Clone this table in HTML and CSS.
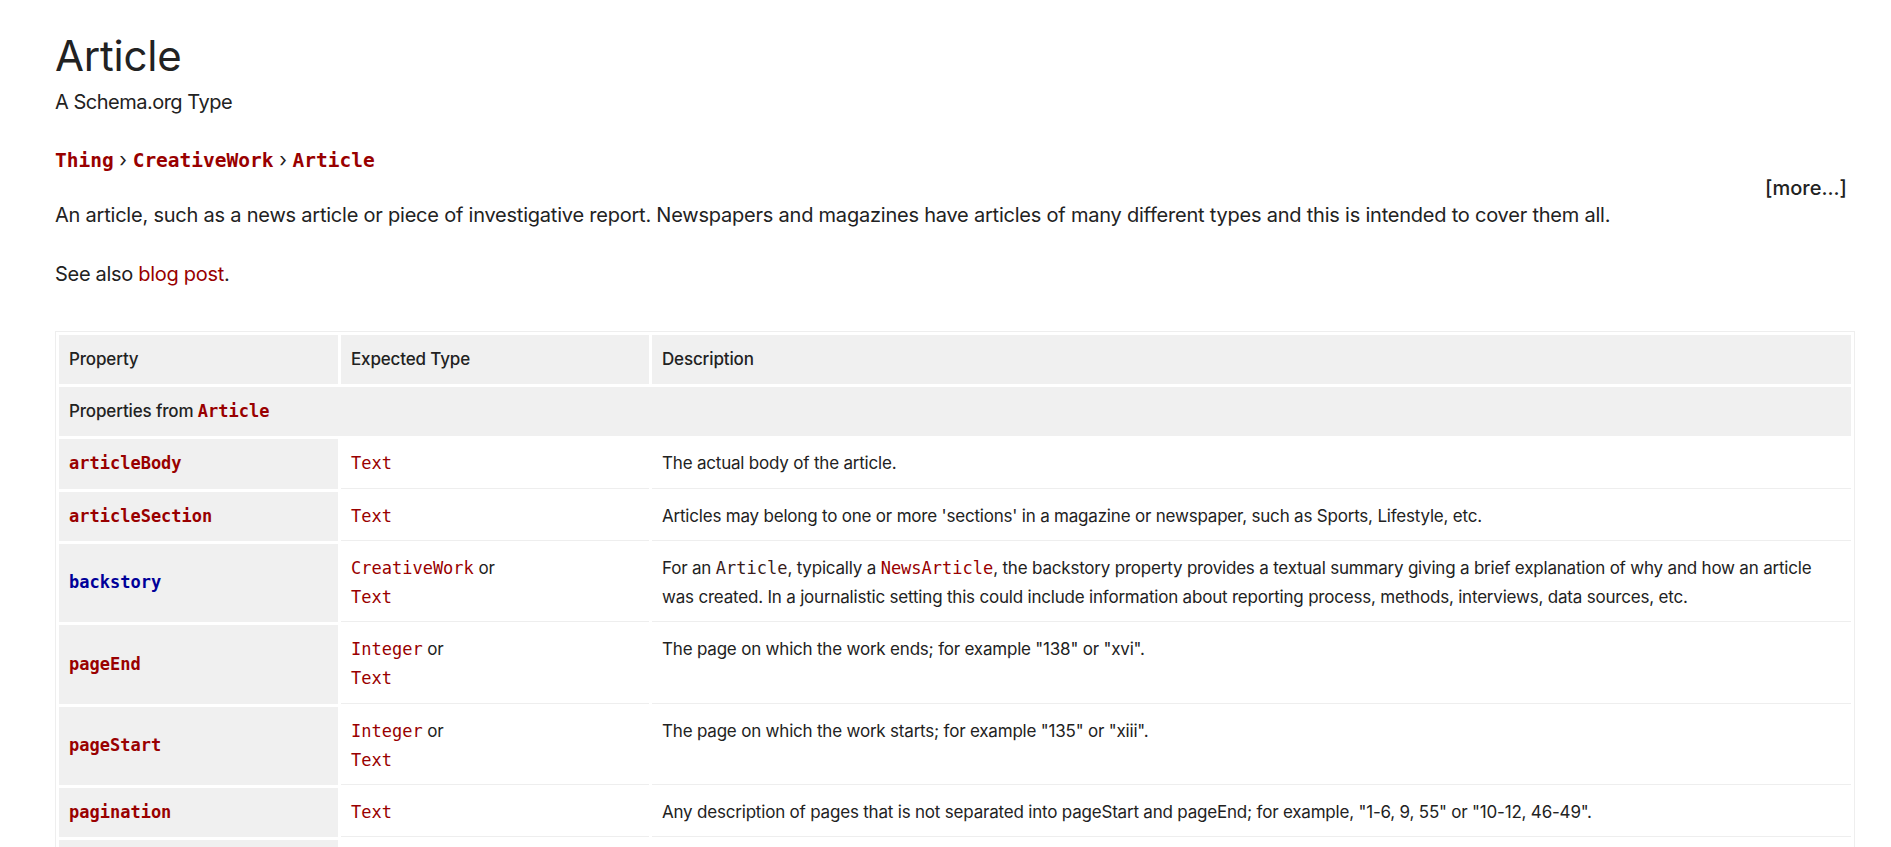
FILE: index.html
```html
<!DOCTYPE html>
<html lang="en">
<head>
<meta charset="utf-8">
<title>Article - Schema.org Type</title>
<link rel="stylesheet" href="styles.css">
</head>
<body>
<div class="page">
  <h1 class="title">Article</h1>
  <div class="subtitle">A Schema.org Type</div>
  <div class="crumbs"><a class="code" href="#">Thing</a><span class="sep"> › </span><a class="code" href="#">CreativeWork</a><span class="sep"> › </span><a class="code" href="#">Article</a></div>
  <div class="more-row"><a href="#">[more...]</a></div>
  <p class="desc">An article, such as a news article or piece of investigative report. Newspapers and magazines have articles of many different types and this is intended to cover them all.</p>
  <p class="see">See also <a href="#">blog post</a>.</p>

  <table class="props">
    <colgroup>
      <col class="c1">
      <col class="c2">
      <col class="c3">
    </colgroup>
    <thead>
      <tr>
        <th class="head">Property</th>
        <th class="head">Expected Type</th>
        <th class="head">Description</th>
      </tr>
    </thead>
    <tbody>
      <tr>
        <th class="group" colspan="3">Properties from <a class="code strong" href="#">Article</a></th>
      </tr>
      <tr>
        <th class="prop"><a class="code strong" href="#">articleBody</a></th>
        <td><a class="code" href="#">Text</a></td>
        <td>The actual body of the article.</td>
      </tr>
      <tr>
        <th class="prop"><a class="code strong" href="#">articleSection</a></th>
        <td><a class="code" href="#">Text</a></td>
        <td>Articles may belong to one or more 'sections' in a magazine or newspaper, such as Sports, Lifestyle, etc.</td>
      </tr>
      <tr>
        <th class="prop"><a class="code strong pending" href="#">backstory</a></th>
        <td><a class="code" href="#">CreativeWork</a> or<br><a class="code" href="#">Text</a></td>
        <td>For an <span class="code">Article</span>, typically a <a class="code" href="#">NewsArticle</a>, the backstory property provides a textual summary giving a brief explanation of why and how an article was created. In a journalistic setting this could include information about reporting process, methods, interviews, data sources, etc.</td>
      </tr>
      <tr>
        <th class="prop"><a class="code strong" href="#">pageEnd</a></th>
        <td><a class="code" href="#">Integer</a> or<br><a class="code" href="#">Text</a></td>
        <td>The page on which the work ends; for example "138" or "xvi".</td>
      </tr>
      <tr>
        <th class="prop"><a class="code strong" href="#">pageStart</a></th>
        <td><a class="code" href="#">Integer</a> or<br><a class="code" href="#">Text</a></td>
        <td>The page on which the work starts; for example "135" or "xiii".</td>
      </tr>
      <tr>
        <th class="prop"><a class="code strong" href="#">pagination</a></th>
        <td><a class="code" href="#">Text</a></td>
        <td>Any description of pages that is not separated into pageStart and pageEnd; for example, "1-6, 9, 55" or "10-12, 46-49".</td>
      </tr>
      <tr>
        <th class="prop"><a class="code strong pending" href="#">speakable</a></th>
        <td><a class="code" href="#">SpeakableSpecification</a> or<br><a class="code" href="#">URL</a></td>
        <td>Indicates sections of a Web page that are particularly 'speakable' in the sense of being highlighted as being especially appropriate for text-to-speech conversion.</td>
      </tr>
      <tr>
        <th class="prop"><a class="code strong" href="#">wordCount</a></th>
        <td><a class="code" href="#">Integer</a></td>
        <td>The number of words in the text of the Article.</td>
      </tr>
    </tbody>
  </table>
</div>
</body>
</html>
```

FILE: styles.css
```css
* {
  box-sizing: border-box;
}

body {
  margin: 0;
  background: #ffffff;
  color: #222222;
  font-family: Inter, "Noto Sans", sans-serif;
}

a {
  color: #990000;
  text-decoration: none;
}

.code {
  font-family: "DejaVu Sans Mono", "Liberation Mono", monospace;
  letter-spacing: 0;
}

.page {
  width: 1800px;
  margin-left: 55px;
  padding-top: 30px;
}

.title {
  margin: 0;
  font-size: 42px;
  font-weight: 400;
  line-height: 52px;
  letter-spacing: -0.2px;
  color: #222222;
}

.subtitle {
  margin-top: 8px;
  font-size: 20px;
  line-height: 24px;
  letter-spacing: -0.5px;
}

.crumbs {
  margin-top: 32px;
  font-size: 20px;
  line-height: 28px;
}

.crumbs .code {
  font-size: 19.5px;
  font-weight: 700;
}

.crumbs .sep {
  color: #222222;
  font-size: 20px;
}

.more-row {
  text-align: right;
  padding-right: 8px;
  font-size: 20px;
  font-weight: 500;
  line-height: 26px;
}

.more-row a {
  color: #222222;
}

.desc {
  margin: 0;
  font-size: 20px;
  line-height: 29px;
  letter-spacing: -0.22px;
}

.see {
  margin: 30px 0 0;
  font-size: 20px;
  line-height: 29px;
  letter-spacing: -0.3px;
}

.props {
  margin-top: 42px;
  width: 1800px;
  table-layout: fixed;
  border: 1px solid #eeeeee;
  border-collapse: separate;
  border-spacing: 3px;
  font-size: 17px;
  line-height: 29.2px;
}

.c1 {
  width: 279px;
}

.c2 {
  width: 308px;
}

.props th {
  text-align: left;
  background: #f0f0f0;
  padding: 10px 10px;
  vertical-align: middle;
  letter-spacing: -0.15px;
}

.props .head,
.props .group {
  font-weight: 500;
}

.props .strong {
  font-weight: 700;
}

.props .pending {
  color: #000099;
}

.props td {
  padding: 10px 10px 9px;
  border-bottom: 1px solid #eeeeee;
  vertical-align: top;
  font-weight: 400;
  letter-spacing: -0.2px;
}

.props td .code {
  font-size: 17px;
  letter-spacing: 0;
}

.props td span.code {
  color: #3a1c1c;
}
```
